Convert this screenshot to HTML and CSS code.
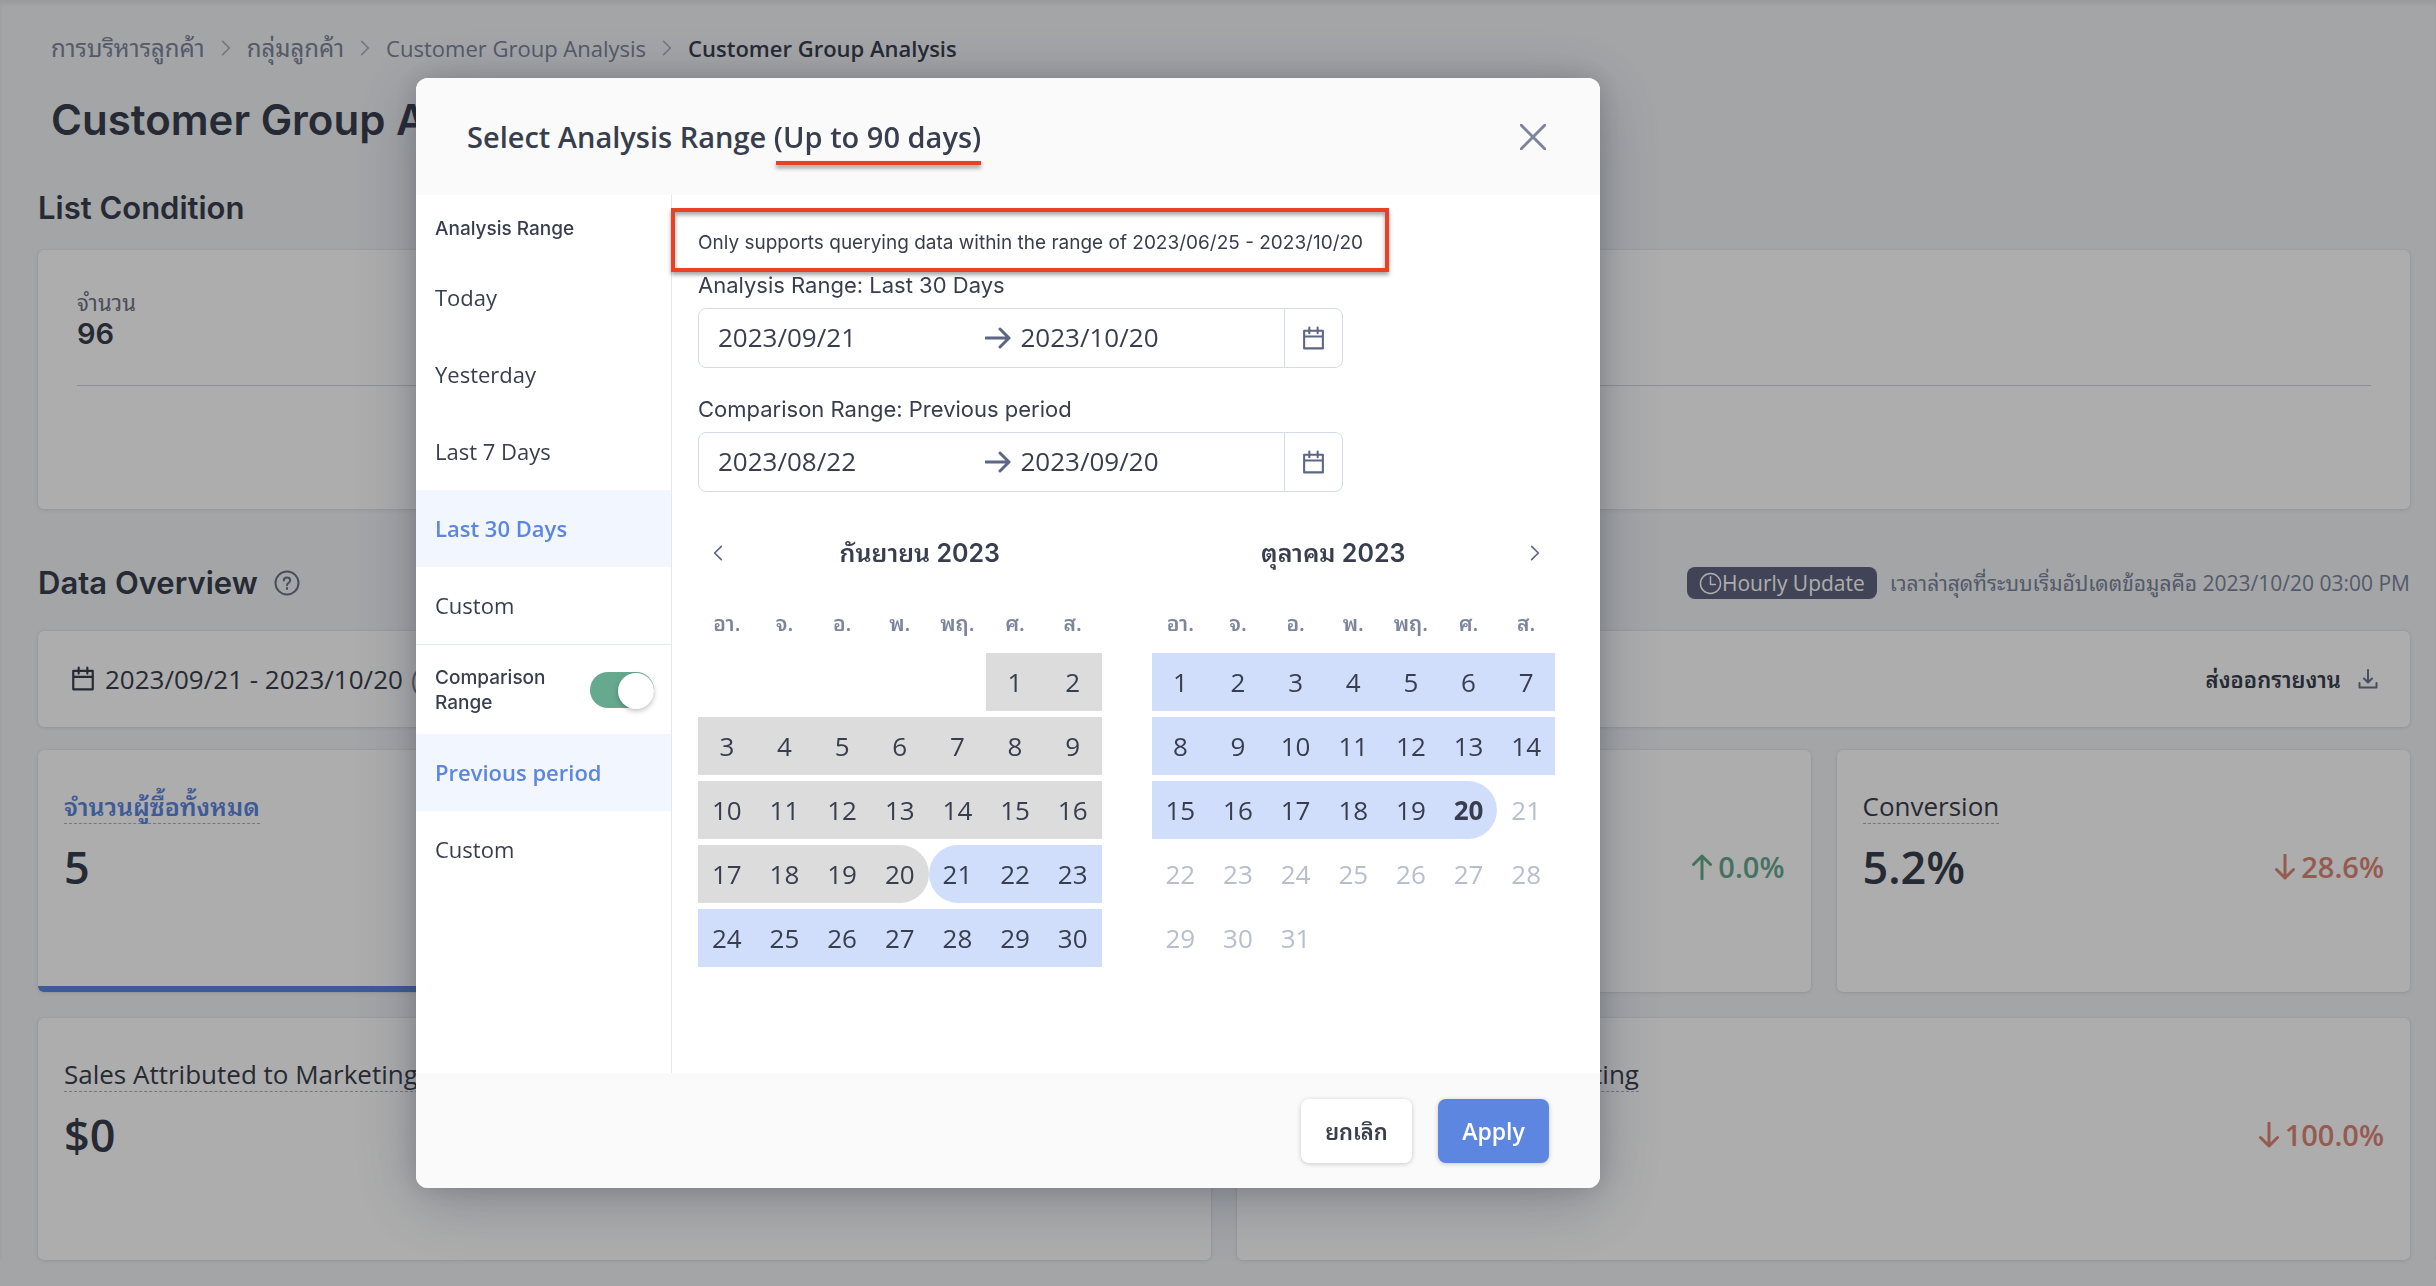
FILE: index.html
```html
<!DOCTYPE html>
<html lang="th">
<head>
  <meta charset="UTF-8" />
  <meta name="viewport" content="width=device-width, initial-scale=1.0" />
  <title>Customer Group Analysis</title>
  <link rel="stylesheet" href="styles.css">
</head>
<body>
  <!-- icons -->
  <svg class="sprite" aria-hidden="true">
    <symbol id="chevron" viewBox="0 0 12 20"><path d="M2 2l8 8-8 8" /></symbol>
    <symbol id="calendar" viewBox="0 0 24 24"><path d="M3 4.500h18v17H3zM3 10h18M8 1.500V7M16 1.500V7" /></symbol>
    <symbol id="arrow-right" viewBox="0 0 26 26"><path d="M1 13h23M15 4l9 9-9 9" /></symbol>
    <symbol id="arrow-down" viewBox="0 0 20 26"><path d="M10 1v23M1.500 15.500L10 24l8.500-8.500" /></symbol>
    <symbol id="clock" viewBox="0 0 24 24"><circle cx="12" cy="12" r="10.500" /><path d="M12 5v8h5" /></symbol>
  </svg>

  <main class="page">
    <nav class="breadcrumb" aria-label="Breadcrumb">
      <a href="#">การบริหารลูกค้า</a>
      <svg class="icon"><use href="#chevron" /></svg>
      <a href="#">กลุ่มลูกค้า</a>
      <svg class="icon"><use href="#chevron" /></svg>
      <a href="#" lang="en">Customer Group Analysis</a>
      <svg class="icon"><use href="#chevron" /></svg>
      <a href="#" lang="en" class="current" aria-current="page">Customer Group Analysis</a>
    </nav>
    <h1>Customer Group Analysis</h1>

    <h2>List Condition</h2>
    <section class="card condition">
      <div class="condition-count">
        <span>จำนวน</span>
        <strong>96</strong>
      </div>
    </section>

    <header class="overview-head">
      <h2>Data Overview</h2>
      <svg class="help" viewBox="0 0 26 26"><circle cx="13" cy="13" r="11.500" /><path d="M9.800 10.500c0-4 6.400-4 6.400 0 0 2.300-3.200 2.300-3.200 4.800M13 18v1" /></svg>
      <span class="badge"><svg><use href="#clock" /></svg>Hourly Update</span>
      <span class="updated">เวลาล่าสุดที่ระบบเริ่มอัปเดตข้อมูลคือ 2023/10/20 03:00 PM</span>
    </header>

    <section class="card toolbar">
      <svg class="icon"><use href="#calendar" /></svg>
      <span class="range">2023/09/21 - 2023/10/20</span>
      <span class="compare">(2023/08/22 - 2023/09/20)</span>
      <button class="export">ส่งออกรายงาน
        <svg viewBox="0 0 20 20"><path d="M10 1v12M6 9.500l4 4 4-4M1.500 14v4.500h17V14" /></svg>
      </button>
    </section>

    <section class="metrics four">
      <article class="card metric active">
        <h3>จำนวนผู้ซื้อทั้งหมด</h3>
        <div class="value"><strong>5</strong></div>
      </article>
      <article class="card metric"></article>
      <article class="card metric unnamed">
        <div class="value"><span class="up"><svg><use href="#arrow-down" /></svg>0.0%</span></div>
      </article>
      <article class="card metric">
        <h3>Conversion</h3>
        <div class="value"><strong>5.2%</strong><span class="down"><svg><use href="#arrow-down" /></svg>28.6%</span></div>
      </article>
    </section>
    <section class="metrics two">
      <article class="card metric">
        <h3>Sales Attributed to Marketing</h3>
        <div class="value"><strong>$0</strong></div>
      </article>
      <article class="card metric">
        <h3>Orders Attributed to Marketing</h3>
        <div class="value"><span class="down"><svg><use href="#arrow-down" /></svg>100.0%</span></div>
      </article>
    </section>
  </main>

  <div class="overlay">
    <div class="modal" role="dialog" aria-modal="true" aria-labelledby="modal-title">
      <header class="modal-head">
        <h2 id="modal-title">Select Analysis Range <span class="limit">(Up to 90 days)</span></h2>
        <button class="close" aria-label="Close"><svg viewBox="0 0 26 26"><path d="M1 1l24 24M25 1L1 25" /></svg></button>
      </header>

      <div class="modal-body">
        <aside class="presets">
          <p class="group">Analysis Range</p>
          <button>Today</button>
          <button>Yesterday</button>
          <button>Last 7 Days</button>
          <button class="selected">Last 30 Days</button>
          <button>Custom</button>
          <label class="group compare-toggle">
            <span>Comparison Range</span>
            <input type="checkbox" role="switch" checked>
          </label>
          <button class="selected">Previous period</button>
          <button>Custom</button>
        </aside>

        <div class="picker">
          <p class="notice">Only supports querying data within the range of 2023/06/25 - 2023/10/20</p>
          <fieldset>
            <legend>Analysis Range: Last 30 Days</legend>
            <div class="range-input">
              <input type="text" value="2023/09/21" aria-label="Analysis start">
              <svg class="to"><use href="#arrow-right" /></svg>
              <input type="text" value="2023/10/20" aria-label="Analysis end">
              <button aria-label="Open calendar"><svg><use href="#calendar" /></svg></button>
            </div>
          </fieldset>
          <fieldset>
            <legend>Comparison Range: Previous period</legend>
            <div class="range-input">
              <input type="text" value="2023/08/22" aria-label="Comparison start">
              <svg class="to"><use href="#arrow-right" /></svg>
              <input type="text" value="2023/09/20" aria-label="Comparison end">
              <button aria-label="Open calendar"><svg><use href="#calendar" /></svg></button>
            </div>
          </fieldset>

          <div class="months">
            <section class="month">
              <header>
                <button class="prev" aria-label="Previous month"><svg><use href="#chevron" /></svg></button>
                <h3>กันยายน 2023</h3>
              </header>
              <table>
                <thead><tr><th>อา.</th><th>จ.</th><th>อ.</th><th>พ.</th><th>พฤ.</th><th>ศ.</th><th>ส.</th></tr></thead>
                <tbody>
                  <tr><td></td><td></td><td></td><td></td><td></td><td class="cmp">1</td><td class="cmp">2</td></tr>
                  <tr class="cmp"><td>3</td><td>4</td><td>5</td><td>6</td><td>7</td><td>8</td><td>9</td></tr>
                  <tr class="cmp"><td>10</td><td>11</td><td>12</td><td>13</td><td>14</td><td>15</td><td>16</td></tr>
                  <tr><td class="cmp">17</td><td class="cmp">18</td><td class="cmp">19</td><td class="cmp end">20</td><td class="sel start">21</td><td class="sel">22</td><td class="sel">23</td></tr>
                  <tr class="sel"><td>24</td><td>25</td><td>26</td><td>27</td><td>28</td><td>29</td><td>30</td></tr>
                </tbody>
              </table>
            </section>
            <section class="month">
              <header>
                <h3>ตุลาคม 2023</h3>
                <button class="next" aria-label="Next month"><svg><use href="#chevron" /></svg></button>
              </header>
              <table>
                <thead><tr><th>อา.</th><th>จ.</th><th>อ.</th><th>พ.</th><th>พฤ.</th><th>ศ.</th><th>ส.</th></tr></thead>
                <tbody>
                  <tr class="sel"><td>1</td><td>2</td><td>3</td><td>4</td><td>5</td><td>6</td><td>7</td></tr>
                  <tr class="sel"><td>8</td><td>9</td><td>10</td><td>11</td><td>12</td><td>13</td><td>14</td></tr>
                  <tr><td class="sel">15</td><td class="sel">16</td><td class="sel">17</td><td class="sel">18</td><td class="sel">19</td><td class="sel end today">20</td><td class="off">21</td></tr>
                  <tr class="off"><td>22</td><td>23</td><td>24</td><td>25</td><td>26</td><td>27</td><td>28</td></tr>
                  <tr class="off"><td>29</td><td>30</td><td>31</td><td></td><td></td><td></td><td></td></tr>
                </tbody>
              </table>
            </section>
          </div>
        </div>
      </div>

      <footer class="modal-foot">
        <button class="btn">ยกเลิก</button>
        <button class="btn primary">Apply</button>
      </footer>
    </div>
  </div>
</body>
</html>
```

FILE: styles.css
```css
/* ─── 0. Variables & reset ─── */
:root {
  --text: #383e4d;
  --muted: #7c859b;
  --blue: #5c86df;
  --green: #66a98e;
  --red: #dc8776;
  --mark: #ea4026;
  --line: #e3e8ed;
  --ui: Inter, "Noto Sans Thai Looped", Loma, "Noto Sans Thai", sans-serif;
  --copy: "Open Sans", "Noto Sans Thai Looped", Loma, "Noto Sans Thai", sans-serif;
}
*, *::before, *::after { box-sizing: border-box; margin: 0; padding: 0; }
html, body { height: 100%; overflow: hidden; }
body { background: #f1f3f6; color: var(--text); font: 24px/32px var(--copy); }
button, input { font: inherit; color: inherit; background: none; border: 0; }
button { cursor: pointer; }
a { color: inherit; text-decoration: none; }
svg { flex: none; fill: none; stroke: currentColor; stroke-width: 2; stroke-linecap: round; stroke-linejoin: round; }
.sprite { position: absolute; width: 0; height: 0; }

/* ─── 1. Page ─── */
.page { padding: 32px 26px 0 38px; box-shadow: inset 0 4px 4px rgba(0, 0, 0, .06); }
.breadcrumb { display: flex; align-items: center; gap: 16px; padding-left: 13px; color: var(--muted); }
.breadcrumb a[lang="en"] { font-size: 22px; }
.breadcrumb .icon { width: 10px; height: 18px; color: #a9b0bf; }
.breadcrumb .current { color: var(--text); font-weight: 600; }
h1 { margin-top: 32px; padding-left: 13px; font: 600 42px/48px var(--ui); }
.page h2 { font: 600 31px/40px var(--ui); }
h1 + h2 { margin-top: 44px; }
.card { background: #fff; border-radius: 6px; box-shadow: 0 0 0 1px rgba(63, 63, 68, .03), 0 1px 4px rgba(63, 63, 68, .1); }

.condition { height: 259px; margin-top: 22px; padding: 36px 39px; }
.condition-count { display: grid; padding-bottom: 35px; border-bottom: 1px solid #cfd4de; font-size: 22px; color: #6b7389; }
.condition-count strong { font: 600 29px/32px var(--ui); color: var(--text); }

.overview-head { display: flex; align-items: center; margin-top: 54px; }
.help { width: 26px; height: 26px; margin-left: 16px; color: #6b7389; }
.badge { display: flex; align-items: center; margin-left: auto; padding: 0 12px; border-radius: 8px; background: #616581; color: #fff; font-size: 21px; }
.badge svg { width: 23px; height: 23px; stroke-width: 1.500; }
.updated { margin-left: 13px; font-size: 21px; color: var(--muted); }

.toolbar { display: flex; align-items: center; height: 96px; margin-top: 28px; padding: 0 32px; font-size: 26px; }
.toolbar .icon { width: 26px; height: 26px; margin-right: 9px; }
.toolbar .compare { margin-left: 8px; color: var(--muted); }
.export { display: flex; align-items: center; gap: 17px; margin-left: auto; font-size: 22px; font-weight: 600; }
.export svg { width: 20px; height: 20px; color: #6b7389; }

.metrics { display: grid; gap: 26px; }
.four { grid-template-columns: repeat(4, 1fr); margin-top: 23px; }
.two { grid-template-columns: repeat(2, 1fr); margin-top: 26px; }
.metric { height: 242px; padding: 39px 26px; }
.metric.unnamed { padding-top: 74px; }
.metric.active { border-bottom: 6px solid var(--blue); }
.metric h3 { width: fit-content; border-bottom: 1px dashed #a9b0bf; font-size: 26px; font-weight: 400; line-height: 34px; }
.metric.active h3 { color: var(--blue); font-size: 25px; font-weight: 600; }
.value { display: flex; align-items: center; min-height: 50px; margin-top: 18px; }
.value strong { font-size: 45px; font-weight: 600; line-height: 50px; }
.up, .down { display: flex; align-items: center; gap: 6px; margin-left: auto; font-size: 29px; font-weight: 600; color: var(--red); }
.up svg, .down svg { width: 20px; height: 26px; stroke-width: 3; }
.up { color: var(--green); }
.up svg { transform: rotate(180deg); }

/* ─── 2. Modal ─── */
.overlay { position: fixed; inset: 0; padding: 78px 0 0 416px; background: rgba(0, 0, 0, .32); }
.modal { width: 1184px; border-radius: 12px; overflow: hidden; background: #fff; box-shadow: 0 12px 64px rgba(33, 43, 74, .3), 0 0 24px rgba(0, 0, 0, .15); }
.modal-head { display: flex; justify-content: space-between; align-items: center; height: 117px; padding: 0 54px 0 51px; background: #fafafa; }
.modal-head h2 { font-size: 29px; font-weight: 600; line-height: 56px; }
.limit { position: relative; }
.limit::after { content: ""; position: absolute; left: 2px; right: 0; bottom: -9px; height: 4px; background: var(--mark); box-shadow: 0 3px 4px rgba(0, 0, 0, .4); }
.close { display: flex; color: var(--muted); }
.close svg { width: 26px; height: 26px; stroke-width: 3; }
.modal-body { display: flex; min-height: 878px; }

.presets { display: flex; flex-direction: column; width: 256px; border-right: 1px solid var(--line); }
.presets button { height: 77px; padding: 0 19px 2px; text-align: left; font-size: 22px; }
.presets .selected { background: #f2f7ff; color: var(--blue); font-weight: 600; }
.group { padding: 0 19px; font: 500 19px/25px var(--ui); }
p.group { padding-top: 21px; padding-bottom: 18px; }
.compare-toggle { display: flex; align-items: center; justify-content: space-between; height: 90px; padding-right: 17px; border-top: 1px solid var(--line); }
.compare-toggle span { width: 120px; }
.compare-toggle input { position: relative; appearance: none; width: 64px; height: 36px; border-radius: 18px; background: var(--green); }
.compare-toggle input::after { content: ""; position: absolute; top: 1px; right: 0; width: 36px; height: 36px; border-radius: 50%; background: #fff; box-shadow: 0 2px 5px rgba(0, 0, 0, .25); }

.picker { flex: 1; padding: 13px 45px 0 0; }
.notice { width: fit-content; margin-left: -1px; padding: 18px 22px 13px 23px; border: 4px solid var(--mark); box-shadow: 0 3px 4px rgba(0, 0, 0, .35), inset 0 3px 4px rgba(0, 0, 0, .35); font: 19px/25px var(--ui); }
fieldset { margin-left: 26px; border: 0; }
fieldset + fieldset { margin-top: 28px; }
legend { font: 22px/26px var(--ui); }
.range-input { display: flex; align-items: center; width: 645px; height: 60px; margin-top: 10px; border: 1px solid #d3dce6; border-radius: 8px; font-size: 26px; }
.range-input input { flex: 1; min-width: 0; height: 56px; padding: 0 0 2px 19px; }
.range-input .to + input { padding-left: 10px; }
.range-input .to { width: 26px; height: 26px; margin-left: 3px; color: #5d6685; stroke-width: 3; }
.range-input button { display: grid; place-items: center; width: 58px; height: 100%; border-left: 1px solid #d3dce6; color: #5d6685; }
.range-input button svg { width: 25px; height: 25px; }

/* ─── 3. Calendar ─── */
.months { display: flex; gap: 50px; margin: 44px 0 0 26px; }
.month { flex: 1; }
.month header { display: grid; grid-template-columns: 40px 1fr; align-items: center; height: 34px; }
.month + .month header { grid-template-columns: 1fr 40px; }
.month h3 { text-align: center; font: 600 25px/34px var(--ui); }
.month header button { display: grid; place-items: center; color: #5d6685; }
.month header svg { width: 10px; height: 18px; }
.prev svg { transform: scaleX(-1); }
table { width: 100%; margin-top: 31px; border-collapse: separate; border-spacing: 0 6px; table-layout: fixed; font-size: 26px; }
th { height: 40px; padding-bottom: 8px; font-size: 21px; font-weight: 600; line-height: 32px; color: var(--muted); }
td { height: 58px; text-align: center; }
.cmp td, td.cmp { background: #dcdcdc; }
.sel td, td.sel { background: #d0ddfb; }
td.start { border-radius: 29px 0 0 29px; }
td.end { border-radius: 0 29px 29px 0; }
td.today { font-weight: 700; }
.off td, td.off { color: #b8becb; }

/* ─── 4. Modal footer ─── */
.modal-foot { display: flex; justify-content: flex-end; align-items: center; gap: 26px; height: 115px; padding: 0 51px; background: #fafafa; }
.btn { min-width: 111px; height: 64px; padding: 0 24px; border-radius: 8px; background: #fff; box-shadow: 0 1px 5px rgba(0, 0, 0, .2); font-size: 22px; font-weight: 600; }
.btn.primary { background: var(--blue); color: #fff; font-size: 23px; }
```
